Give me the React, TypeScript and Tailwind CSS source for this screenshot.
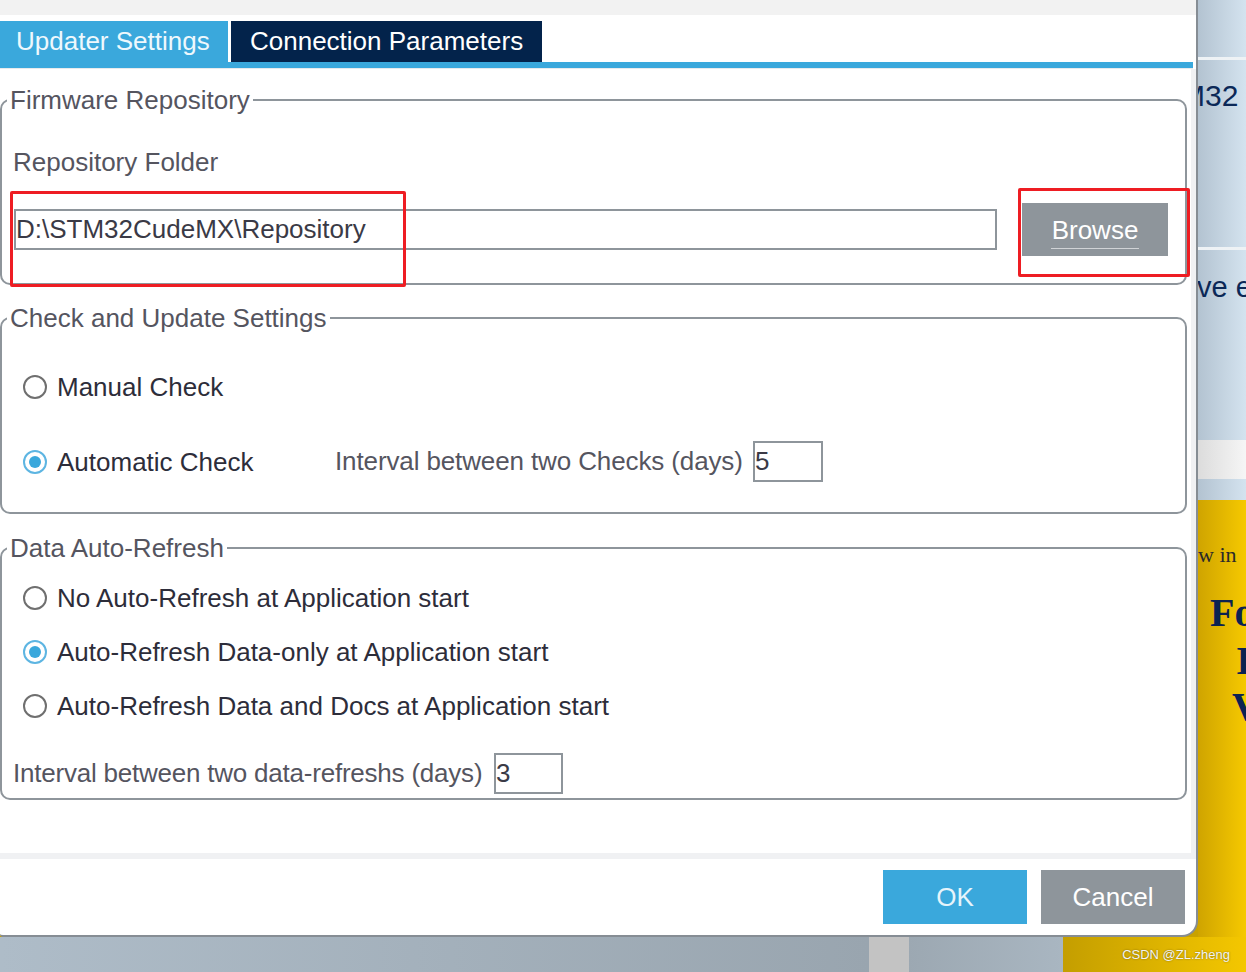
import React from "react";

function Radio({ checked }: { checked?: boolean }) {
  if (checked) {
    return (
      <span className="flex items-center justify-center w-[24px] h-[24px] rounded-full border-2 border-[#5db5e2] bg-white shrink-0">
        <span className="w-[12px] h-[12px] rounded-full bg-[#3aa8dc]" />
      </span>
    );
  }
  return <span className="w-[24px] h-[24px] rounded-full border-2 border-[#6f6f6f] bg-white shrink-0" />;
}

function Group({ title, children }: { title: string; children: React.ReactNode }) {
  return (
    <fieldset className="w-[1187px] p-0 m-0 border-2 border-[#8e959b] rounded-[10px]">
      <legend className="ml-[5px] px-[3px] text-[26px] leading-[30px] text-[#55555f]">{title}</legend>
      {children}
    </fieldset>
  );
}

function Option({ label, checked }: { label: string; checked?: boolean }) {
  return (
    <div className="flex items-center gap-[10px] h-[30px] text-[26px] leading-[30px] text-[#2d2d3a]">
      <Radio checked={checked} />
      <span>{label}</span>
    </div>
  );
}

export default function App() {
  return (
    <div className="w-[1246px] h-[972px] overflow-hidden flex flex-col font-['Liberation_Sans',Arial,sans-serif]">
      <div className="flex h-[937px] shrink-0 bg-[#c9a200]">
        {/* Dialog */}
        <div className="w-[1198px] shrink-0 flex flex-col bg-white rounded-br-[16px] rounded-bl-[3px] border-r-2 border-b-2 border-[#868d94] overflow-hidden">
          <div className="h-[15px] bg-[#f2f2f2]" />
          <div className="h-[6px]" />

          {/* Tabs */}
          <div className="flex h-[41px]">
            <div className="w-[228px] bg-[#3aa8dc] pl-[16px] flex items-center text-[26px] text-[#eef8fd] whitespace-nowrap">
              Updater Settings
            </div>
            <div className="w-[311px] ml-[3px] bg-[#03234b] pl-[19px] flex items-center text-[26px] text-white whitespace-nowrap">
              Connection Parameters
            </div>
          </div>
          <div className="h-[6px] w-[1193px] bg-[#3aa8dc]" />
          <div className="h-[1px] w-[1193px] bg-[#e8eaec]" />

          {/* Content */}
          <div className="flex h-[784px]">
            <div className="w-[1191px] flex flex-col">
              <div className="mt-[16px]">
                <Group title="Firmware Repository">
                  <div className="pt-[32px] pb-[27px]">
                    <div className="pl-[11px] text-[26px] leading-[30px] text-[#55555f]">Repository Folder</div>
                    <div className="mt-[26px] pl-[12px] flex items-center h-[53px]">
                      <div className="w-[983px] h-[41px] border-2 border-[#8e959b] flex items-center text-[26px] text-[#3a3a46] whitespace-nowrap">
                        D:\STM32CudeMX\Repository
                      </div>
                      <button className="ml-[25px] w-[146px] h-[53px] bg-[#8e959b] flex items-center justify-center">
                        <span className="text-[26px] leading-[30px] text-white border-b border-[#d0d3d6] px-[1px] pb-[3px] mt-[5px]">
                          Browse
                        </span>
                      </button>
                    </div>
                  </div>
                </Group>
              </div>

              <div className="mt-[18px]">
                <Group title="Check and Update Settings">
                  <div className="pt-[39px] pb-[30px] pl-[21px]">
                    <Option label="Manual Check" />
                    <div className="mt-[39px] flex items-center h-[41px]">
                      <div className="w-[312px]">
                        <Option label="Automatic Check" checked />
                      </div>
                      <span className="w-[408px] text-[26px] tracking-[-0.12px] text-[#55555f] whitespace-nowrap">
                        Interval between two Checks (days)
                      </span>
                      <div className="ml-[10px] w-[70px] h-[41px] border-2 border-[#8e959b] flex items-center text-[26px] text-[#3a3a46]">
                        5
                      </div>
                    </div>
                  </div>
                </Group>
              </div>

              <div className="mt-[19px]">
                <Group title="Data Auto-Refresh">
                  <div className="pt-[20px] pb-[4px]">
                    <div className="pl-[21px] flex flex-col gap-[24px]">
                      <Option label="No Auto-Refresh at Application start" />
                      <Option label="Auto-Refresh Data-only at Application start" checked />
                      <Option label="Auto-Refresh Data and Docs at Application start" />
                    </div>
                    <div className="mt-[32px] pl-[11px] flex items-center h-[41px]">
                      <span className="w-[471px] text-[26px] tracking-[-0.22px] text-[#55555f] whitespace-nowrap">
                        Interval between two data-refreshs (days)
                      </span>
                      <div className="ml-[10px] w-[69px] h-[41px] border-2 border-[#8e959b] flex items-center text-[26px] text-[#3a3a46]">
                        3
                      </div>
                    </div>
                  </div>
                </Group>
              </div>
            </div>
            <div className="flex-1 bg-[#f0f1f3]" />
          </div>
          <div className="h-[6px] bg-[#f0f1f3]" />

          {/* Footer */}
          <div className="flex-1 flex items-center justify-end gap-[14px] pr-[11px]">
            <button className="w-[144px] h-[54px] bg-[#3aa8dc] text-[26px] text-[#e6f4fb]">OK</button>
            <button className="w-[144px] h-[54px] bg-[#8e959b] text-[26px] text-white">Cancel</button>
          </div>
        </div>

        {/* Background app on the right */}
        <div className="flex-1 flex flex-col overflow-hidden">
          <div className="h-[57px] bg-gradient-to-r from-[#b3c3d1] to-[#d4e3ef]" />
          <div className="h-[3px] bg-[#eef2f5]" />
          <div className="h-[187px] bg-gradient-to-r from-[#b3c3d1] to-[#d4e3ef] pt-[20px] whitespace-nowrap">
            <div className="-ml-[18px] text-[30px] leading-[32px] text-[#0b2857]">M32</div>
          </div>
          <div className="h-[3px] bg-[#eef2f5]" />
          <div className="h-[190px] bg-gradient-to-r from-[#b3c3d1] to-[#d4e3ef] pt-[21px] whitespace-nowrap">
            <div className="-ml-[1px] text-[29px] leading-[32px] text-[#0b2857]">ve ex</div>
          </div>
          <div className="h-[39px] bg-gradient-to-r from-[#dcdcdc] to-[#f6f6f6]" />
          <div className="h-[21px] bg-gradient-to-r from-[#b3c3d1] to-[#d4e3ef]" />
          <div className="flex-1 bg-gradient-to-r from-[#cfa400] to-[#f6c900] whitespace-nowrap font-['Liberation_Serif',serif] text-[#0b2251]">
            <div className="mt-[43px] text-[22px] leading-[24px] text-[#2a2a2a]">w in</div>
            <div className="mt-[26px] ml-[12px] text-[40px] leading-[40px] font-bold">Fo</div>
            <div className="mt-[8px] ml-[38px] text-[40px] leading-[40px] font-bold">I</div>
            <div className="mt-[6px] ml-[34px] text-[40px] leading-[40px] font-bold">V</div>
          </div>
        </div>
      </div>

      {/* Bottom strip below the dialog */}
      <div className="flex flex-1">
        <div className="w-[869px] bg-gradient-to-r from-[#aebcc8] to-[#99a5af]" />
        <div className="w-[40px] bg-[#c3c3c3]" />
        <div className="w-[154px] bg-gradient-to-r from-[#9ca8b2] to-[#a9b6c1]" />
        <div className="flex-1 bg-gradient-to-r from-[#c49e00] to-[#f4c700] flex items-center justify-end pr-[16px]">
          <span className="text-[13px] text-[#f3f3f3] [text-shadow:0_0_2px_rgba(0,0,0,0.45)]">CSDN @ZL.zheng</span>
        </div>
      </div>

      {/* Red annotation boxes */}
      <div className="absolute left-[10px] top-[191px] w-[396px] h-[96px] border-[3px] border-[#ee1d23] rounded-[2px]" />
      <div className="absolute left-[1018px] top-[188px] w-[172px] h-[89px] border-[3px] border-[#ee1d23] rounded-[2px]" />
    </div>
  );
}
